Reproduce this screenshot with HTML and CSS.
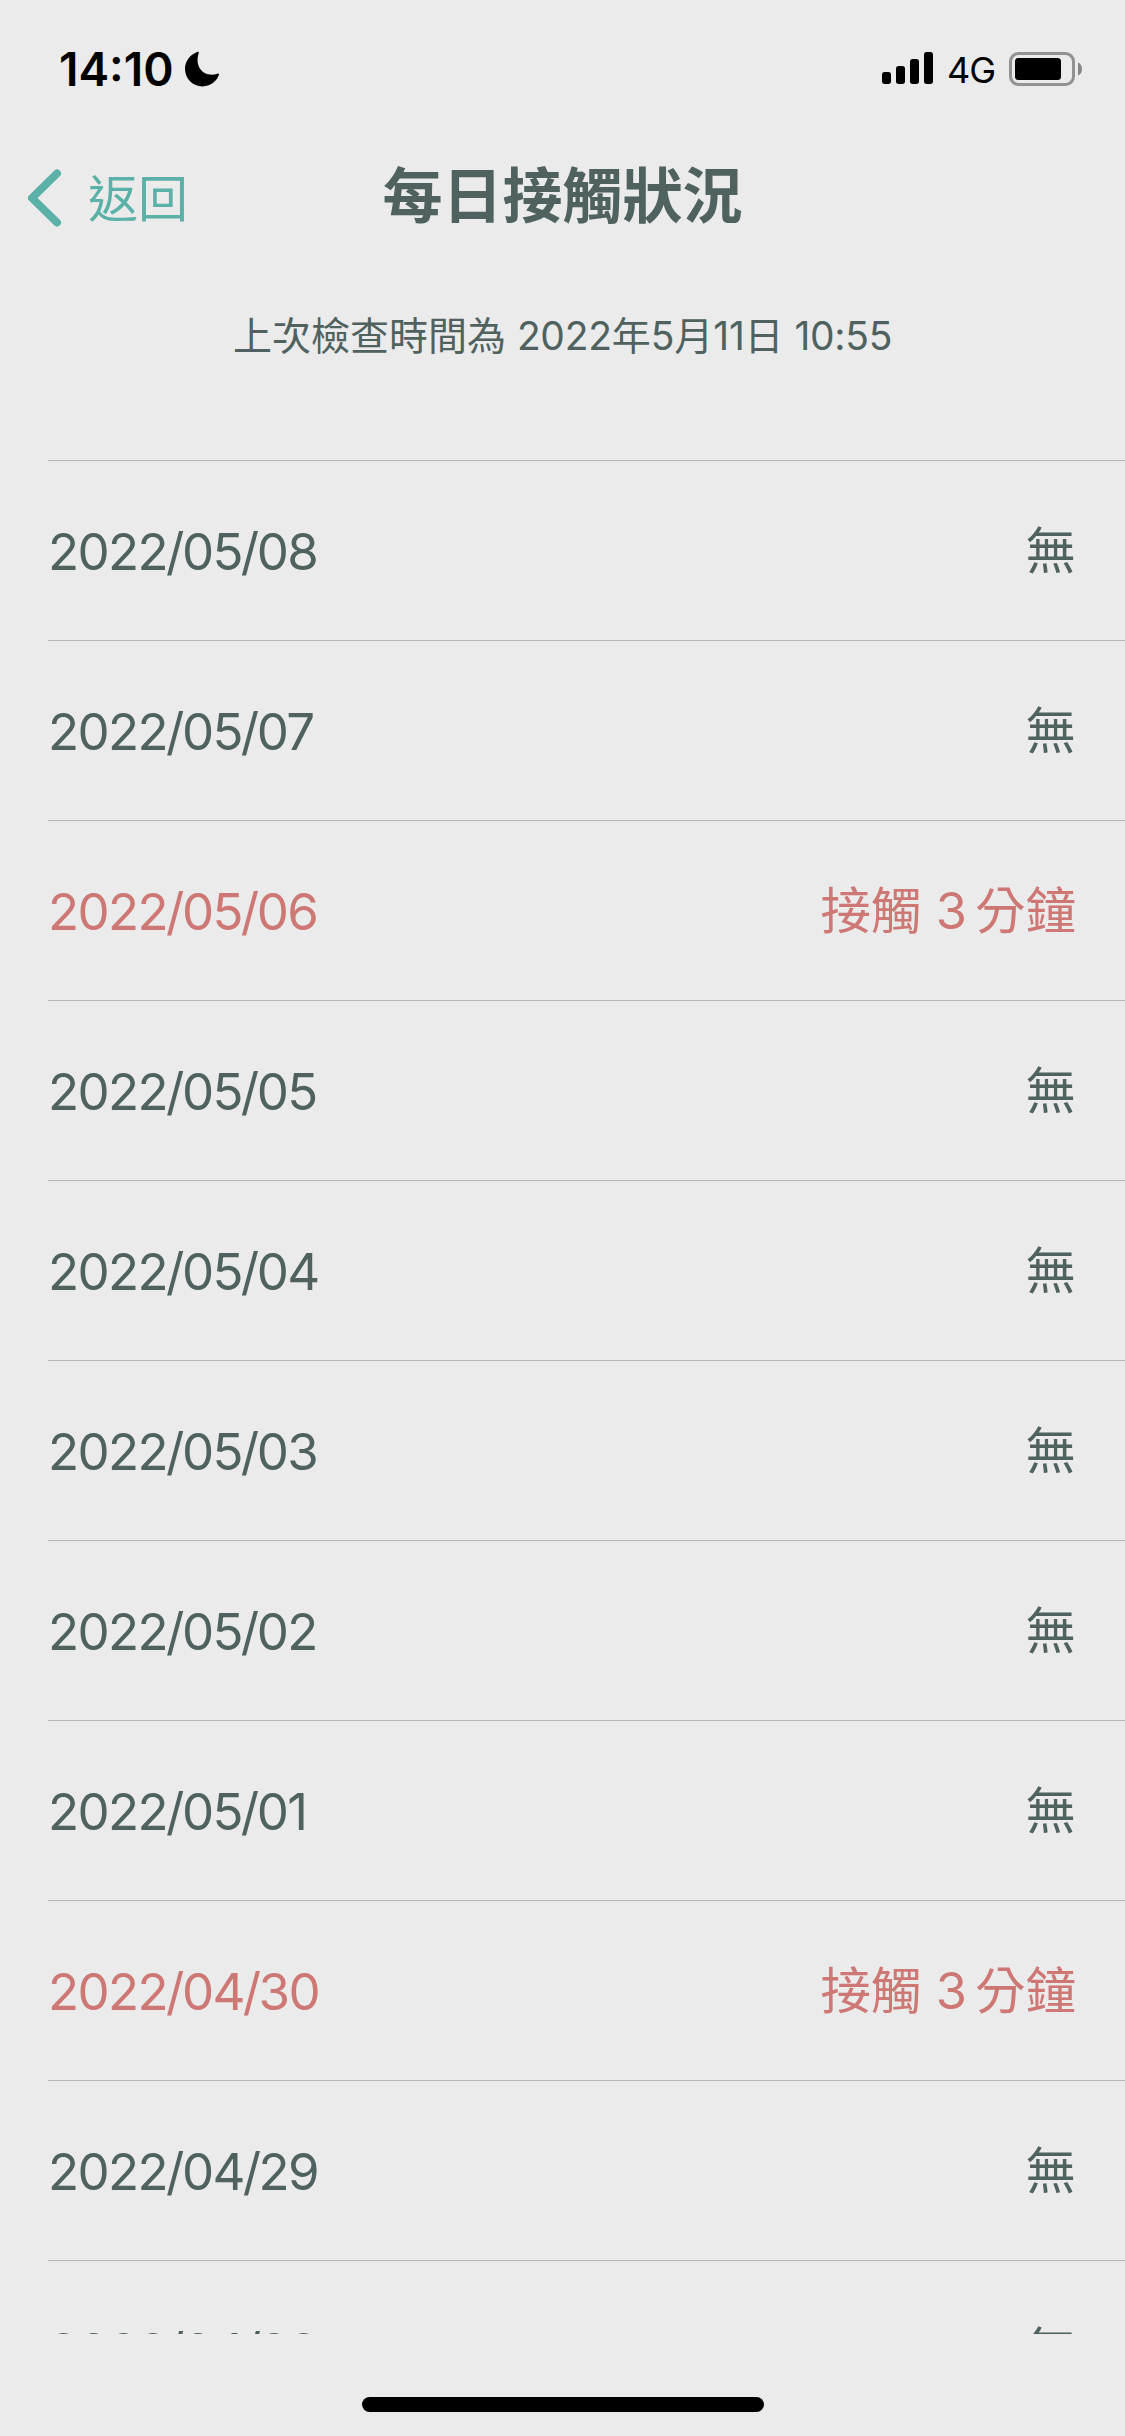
FILE: index.html
```
<!DOCTYPE html>
<html lang="zh-Hant">
<head>
<meta charset="utf-8">
<title>每日接觸狀況</title>
<link rel="stylesheet" href="styles.css">
</head>
<body>
<div class="screen">
  <div class="status-bar">
    <div class="status-left">
      <span class="clock">14:10</span>
      <svg class="moon" width="36" height="36" viewBox="0 0 36 36"><path d="M13.2 .9C14.3 .4 15.1 1.2 14.7 2.3C13.6 5.1 13.2 9.5 13.9 12.4C15.1 18.4 20 23 26 23.6C28.6 23.8 31.2 23.5 33.3 22.7C34.5 22.2 35.3 23 34.9 24.1C32.3 31 26 35.4 18.6 35.4C8.700 35.400 1 27.700 1 17.800C1 10.200 5.800 3.700 13.200 .900Z"/></svg>
    </div>
    <div class="status-right">
      <svg class="signal" width="51" height="34" viewBox="0 0 51 34"><rect x="0" y="20" width="9" height="12" rx="2.700"/><rect x="14" y="14" width="9" height="18" rx="2.700"/><rect x="28" y="7" width="9" height="25" rx="2.700"/><rect x="42" y="0" width="9" height="32" rx="2.700"/></svg>
      <span class="network">4G</span>
      <svg class="battery" width="74" height="34" viewBox="0 0 74 34"><rect x="1.500" y="1.500" width="63" height="31" rx="8" fill="none" stroke="#929292" stroke-width="3"/><rect x="6" y="6" width="46" height="22" rx="3.500"/><path d="M69 10.500C74.300 12.500 74.300 21.500 69 23.500Z" fill="#858585"/></svg>
    </div>
  </div>
  <header class="nav">
    <a class="back">
      <svg width="34" height="58" viewBox="0 0 34 58"><path d="M29 4.500L4 29L29 53.500" fill="none" stroke="currentColor" stroke-width="8" stroke-linecap="round" stroke-linejoin="round"/></svg>
      <span>返回</span>
    </a>
    <h1 class="title">每日接觸狀況</h1>
  </header>
  <p class="checked">上次檢查時間為 <span class="num">2022</span>年5月<span class="num">11</span>日 <span class="num">10:55</span></p>
  <ul class="list">
    <li class="row"><span class="date">2022<i>/</i>05<i>/</i>08</span><span class="state">無</span></li>
    <li class="row"><span class="date">2022<i>/</i>05<i>/</i>07</span><span class="state">無</span></li>
    <li class="row contact"><span class="date">2022<i>/</i>05<i>/</i>06</span><span class="state">接觸 <span class="minutes">3</span>分鐘</span></li>
    <li class="row"><span class="date">2022<i>/</i>05<i>/</i>05</span><span class="state">無</span></li>
    <li class="row"><span class="date">2022<i>/</i>05<i>/</i>04</span><span class="state">無</span></li>
    <li class="row"><span class="date">2022<i>/</i>05<i>/</i>03</span><span class="state">無</span></li>
    <li class="row"><span class="date">2022<i>/</i>05<i>/</i>02</span><span class="state">無</span></li>
    <li class="row"><span class="date">2022<i>/</i>05<i>/</i>01</span><span class="state">無</span></li>
    <li class="row contact"><span class="date">2022<i>/</i>04<i>/</i>30</span><span class="state">接觸 <span class="minutes">3</span>分鐘</span></li>
    <li class="row"><span class="date">2022<i>/</i>04<i>/</i>29</span><span class="state">無</span></li>
    <li class="row"><span class="date">2022<i>/</i>04<i>/</i>28</span><span class="state">無</span></li>
  </ul>
  <footer class="home"><div class="home-bar"></div></footer>
</div>
</body>
</html>
```
FILE: styles.css
```
* { box-sizing: border-box; }
body { margin: 0; background: #ebebeb; }
.screen {
  width: 1125px;
  height: 2436px;
  display: flex;
  flex-direction: column;
  overflow: hidden;
  color: #4f625f;
  font-family: Inter, "Noto Sans CJK TC", sans-serif;
}
svg { display: block; flex: none; }
.status-bar {
  height: 138px;
  flex: none;
  display: flex;
  justify-content: space-between;
  padding: 0 42px 0 59px;
  color: #000;
}
.status-left, .status-right { display: flex; height: 138px; align-items: center; }
.clock { font-size: 46px; font-weight: 600; line-height: 54px; width: 125px; white-space: nowrap; }
.signal { margin-right: 14px; }
.network { font-size: 36px; font-weight: 400; line-height: 44px; width: 62px; padding-top: 2px; letter-spacing: -1px; }
.nav {
  height: 120px;
  flex: none;
  display: grid;
  grid-template-columns: 280px 1fr 280px;
  align-items: center;
}
.back {
  display: flex;
  align-items: center;
  gap: 26px;
  padding-left: 28px;
  color: #5bb1a7;
  font-size: 50px;
  line-height: 60px;
}
.back span { padding-top: 1px; }
.title { margin: 0; padding-bottom: 5px; text-align: center; font-size: 60px; font-weight: 700; line-height: 80px; }
.checked { margin: 0; height: 202px; flex: none; padding-top: 49px; text-align: center; font-size: 39px; line-height: 58px; }
.num { letter-spacing: -0.3px; }
.list {
  list-style: none;
  margin: 0;
  padding: 0 0 0 48px;
  height: 1874px;
  flex: none;
  overflow: hidden;
}
.row {
  height: 180px;
  border-top: 1px solid #b5b8b7;
  display: flex;
  align-items: center;
  justify-content: space-between;
  padding: 4px 49px 0 0;
  font-size: 51px;
  line-height: 76px;
}
.date { letter-spacing: -1.6px; padding-bottom: 1px; }
.date i { font-style: normal; margin: 0 -1px; }
.state { font-size: 50.5px; padding-bottom: 3px; }
.contact { color: #cd7875; }
.minutes { margin-right: 8px; }
.home { flex: 1; display: flex; justify-content: center; padding-top: 63px; }
.home-bar { width: 402px; height: 15px; border-radius: 8px; background: #000; }
```
